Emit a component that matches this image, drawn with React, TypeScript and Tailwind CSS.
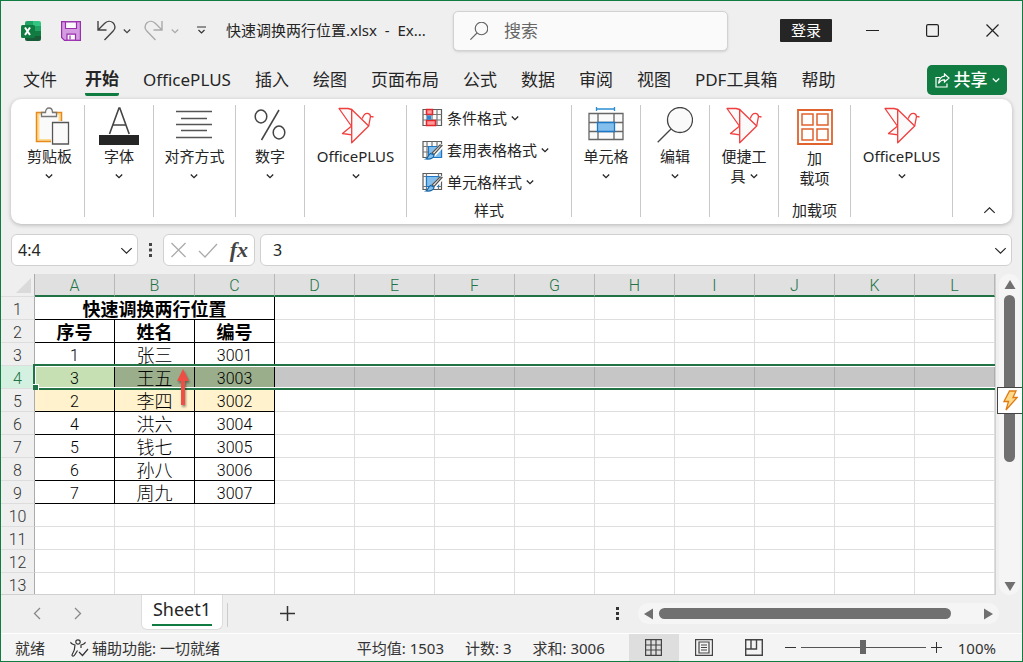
import type { ReactNode } from 'react';

const uiFont = 'font-["Noto_Sans","Noto_Sans_CJK_SC",sans-serif]';
const cellFont = 'font-["Roboto","Noto_Sans_CJK_SC",sans-serif]';

const tabs = ['文件', '开始', 'OfficePLUS', '插入', '绘图', '页面布局', '公式', '数据', '审阅', '视图', 'PDF工具箱', '帮助'];
const columns = ['A', 'B', 'C', 'D', 'E', 'F', 'G', 'H', 'I', 'J', 'K', 'L'];
const rowCount = 13;

const records: Record<number, string[]> = {
  2: ['序号', '姓名', '编号'],
  3: ['1', '张三', '3001'],
  4: ['3', '王五', '3003'],
  5: ['2', '李四', '3002'],
  6: ['4', '洪六', '3004'],
  7: ['5', '钱七', '3005'],
  8: ['6', '孙八', '3006'],
  9: ['7', '周九', '3007'],
};

function Chevron({ className = '', size = 8, up = false }: { className?: string; size?: number; up?: boolean }) {
  return (
    <svg width={size} height={size} viewBox="0 0 8 8" fill="none" stroke="currentColor" className={`shrink-0 ${className}`}
      strokeWidth={size > 8 ? 0.7 : 1.3}>
      <path d={up ? 'M0.8 5.5 4 2.3 7.2 5.5' : 'M0.8 2.5 4 5.7 7.2 2.5'} />
    </svg>
  );
}

function ExcelLogo() {
  return (
    <svg width="20" height="20" viewBox="0 0 20 20">
      <path d="M6 0h7v5H4V2a2 2 0 0 1 2-2Z" fill="#21a366" />
      <path d="M12 0h6a2 2 0 0 1 2 2v3h-8Z" fill="#33c481" />
      <path d="M4 5h8v5H4Z" fill="#107c41" />
      <path d="M12 5h8v5h-8Z" fill="#21a366" />
      <path d="M4 10h8v5H4Z" fill="#185c37" />
      <path d="M12 10h8v5h-8Z" fill="#107c41" />
      <path d="M4 15h16v3a2 2 0 0 1-2 2H6a2 2 0 0 1-2-2Z" fill="#185c37" />
      <rect y="4" width="14" height="13" rx="1.5" fill="#107c41" />
      <path d="m4 6.500 5 7.500M9 6.500 4 14" stroke="#fff" strokeWidth="2" />
    </svg>
  );
}

function SaveIcon() {
  return (
    <svg width="20" height="20" viewBox="0 0 20 20" stroke="#9a2fae" strokeWidth="1.2">
      <path d="M.6.6h18.800v18.800H3.500L.6 16.500Z" fill="#d59be0" />
      <path d="M4.500.8h11v6.700h-11Z" fill="#fafafa" />
      <path d="M6 19.200v-6h8.500v6Z" fill="#fafafa" />
      <path d="M9 14.500v4" fill="none" />
    </svg>
  );
}

function UndoIcon({ flip = false }: { flip?: boolean }) {
  return (
    <svg width="20" height="21" viewBox="0 0 20 21" fill="none" stroke="currentColor" strokeWidth="1.4"
      className={flip ? '-scale-x-100' : ''}>
      <path d="M1 1v9h8.500M1.500 9.500 7.500 3.500C10 1 13.500.6 16 2.800c2.600 2.300 2.600 5.900.2 8.200L7.500 20" />
    </svg>
  );
}

function SearchIcon({ size }: { size: number }) {
  return (
    <svg width={size} height={size} viewBox="0 0 36 36" fill="none" stroke="currentColor" strokeWidth={size > 20 ? 1.3 : 2.4}>
      <circle cx="23" cy="13" r="12.500" fill="#fafafa" />
      <path d="M14 22 .7 35.300" />
    </svg>
  );
}

function PasteIcon() {
  return (
    <svg width="41" height="38" viewBox="-6 0 41 38">
      <path d="M1.500 5.500h25v29h-25Z" fill="#fbdc97" stroke="#e8871a" strokeWidth="1.500" />
      <path d="M4.500 8h19v24h-19Z" fill="#fafafa" />
      <path d="M6.500 9.500v-4h4C10.500 2.500 12 1 14 1s3.500 1.500 3.500 4.500h4v4Z" fill="#fafafa" stroke="#777" strokeWidth="1.300" />
      <path d="M16 14h19v24H16Z" fill="#fff" />
      <path d="M17.500 15.500h16v21.500h-16Z" fill="#fafafa" stroke="#555" strokeWidth="1.300" />
    </svg>
  );
}

function FontIcon() {
  return (
    <svg width="40" height="38" viewBox="0 0 40 38">
      <path d="M10.500 27 20 1h.8L30.200 27M13.800 18h13" fill="none" stroke="#444" strokeWidth="1.600" />
      <path d="M0 28h40v10H0Z" fill="#252525" />
    </svg>
  );
}

function AlignIcon() {
  return (
    <svg width="36" height="38" viewBox="0 0 36 38" stroke="#555" strokeWidth="1.300">
      <path d="M0 4.500h36M5 11.500h26M0 17.500h36M5 23.500h26M0 30.500h36" />
    </svg>
  );
}

function PercentIcon() {
  return (
    <svg width="32" height="38" viewBox="0 0 32 38" fill="none" stroke="#444" strokeWidth="1.500">
      <ellipse cx="7" cy="9.500" rx="5.800" ry="6.500" />
      <ellipse cx="25" cy="25.500" rx="5.800" ry="6.500" />
      <path d="M25 3 7.500 33" />
    </svg>
  );
}

function BirdIcon() {
  return (
    <svg width="36" height="38" viewBox="0 0 36 38" fill="#fafafa" stroke="#f03e3e" strokeWidth="1.300" strokeLinejoin="round">
      <path d="M1 1.500h9l3.700 1V19.500Z" />
      <path d="m13 19.500-8.500 7 9.200 1.300" />
      <path d="M24.300 11.500c1-3.500 3-5.300 5.200-5.200 1.800.1 2.700 1.200 3 3L35.500 10M32.500 9.300 30.700 19" fill="none" />
      <path d="M13.700 2.500 30.700 19 13.700 35.800Z" />
    </svg>
  );
}

function CellsIcon() {
  return (
    <svg width="36" height="36" viewBox="0 0 36 36" fill="none" stroke="#666" strokeWidth="1.300">
      <path d="M1 6.500h34v26H1Z" fill="#fafafa" />
      <path d="M1 15.500h34M1 24.500h34M10 6.500v26M26 6.500v26" />
      <path d="M9.500 15.500h17v9h-17Z" fill="#83beec" stroke="#1e77c5" />
      <path d="M8.500 2h18M8.500 0v4M26.500 0v4" stroke="#2a8dd4" />
    </svg>
  );
}

function AddinIcon() {
  return (
    <svg width="36" height="38" viewBox="0 0 36 38" fill="none" stroke="#e0622d">
      <path d="M1 3h34v34H1Z" strokeWidth="1.800" />
      <path d="M5 7h11v11H5ZM20 7h11v11H20ZM5 22h11v11H5ZM20 22h11v11H20Z" strokeWidth="1.500" />
    </svg>
  );
}

function StyleIcon({ kind }: { kind: 'condition' | 'table' | 'cell' }) {
  return (
    <svg width="21" height="20" viewBox="0 0 21 20" fill="none" strokeWidth="1.200">
      <path d="M1 1.500h18.500v16H1Z" fill="#fafafa" stroke="#5c5c5c" />
      {kind !== 'cell' && <path d="M1 6.500h18.500M1 12h18.500M5 1.500v16M10 1.500v16M15 1.500v16" stroke="#777" />}
      {kind === 'condition' && (
        <>
          <path d="M4.500 1.500h6v5h-6ZM4.500 12.500h9v5h-9Z" fill="#ff9b9b" stroke="#e3262b" strokeWidth="1.500" />
          <path d="M5 7.300h4v4.500H5Z" fill="#2b88d8" />
        </>
      )}
      {kind === 'table' && <path d="M6.500 6.500h13v11h-13Z" fill="#83beec" stroke="#1e77c5" />}
      {kind === 'cell' && (
        <>
          <path d="M4.500 1.500v16M16.500 1.500v16M1 4.500h18.500M1 14.500h18.500" stroke="#777" />
          <path d="M4.500 4.500h12v10h-12Z" fill="#83beec" stroke="#1e77c5" />
        </>
      )}
      {kind !== 'condition' && (
        <>
          <path d="M20.500 5 11 15" stroke="#fff" strokeWidth="5" />
          <path d="m20 5.500-8 9-2-1.500 8-8Z" fill="#fafafa" stroke="#555" />
          <path d="M12 15c0 3-3 4.500-8 4 2-1 2-4 4.500-5.500Z" fill="#83beec" stroke="#1565a8" />
        </>
      )}
    </svg>
  );
}

function RibbonGroup({ width, title, children }: { width: string; title?: string; children: ReactNode }) {
  return (
    <div className={`${width} flex shrink-0 flex-col items-center justify-between border-r border-[#c8c8c8]`}>
      {children}
      {title && <span className="mb-px text-[15px] leading-3">{title}</span>}
    </div>
  );
}

function BigButton({ icon, label }: { icon: ReactNode; label: string }) {
  return (
    <button className="flex flex-col items-center">
      <span className="flex h-[41px] items-start justify-center pt-0.5">{icon}</span>
      <span className="text-[15px] leading-5 whitespace-nowrap">{label}</span>
      <Chevron className="mt-1.5" />
    </button>
  );
}

function StyleButton({ kind, label }: { kind: 'condition' | 'table' | 'cell'; label: string }) {
  return (
    <button className="flex h-[26px] items-center text-[15px]">
      <StyleIcon kind={kind} />
      <span className="mr-1 ml-1">{label}</span>
      <Chevron />
    </button>
  );
}

function TitleBar() {
  return (
    <header className="flex h-[59px] shrink-0 items-center pl-5">
      <ExcelLogo />
      <button aria-label="保存" className="ml-5"><SaveIcon /></button>
      <button aria-label="撤消" className="ml-4 flex items-center gap-1.5 text-[#444]"><UndoIcon /><Chevron /></button>
      <button aria-label="恢复" className="ml-3 flex items-center gap-2 text-[#aaa]"><UndoIcon flip /><Chevron /></button>
      <button aria-label="自定义快速访问工具栏" className="ml-[18px]">
        <svg width="9" height="9" viewBox="0 0 9 9" fill="none" stroke="#333" strokeWidth="1.200"><path d="M0 1h9M1.500 4l3 3 3-3" /></svg>
      </button>
      <span className="ml-5 w-[202px] text-[15px] whitespace-pre">快速调换两行位置.xlsx  -  Ex...</span>
      <label className="ml-[25px] flex h-10 w-[275px] items-center rounded-[5px] border border-[#d2d2d2] bg-[#fafafa] pl-4 text-[#666] shadow-sm">
        <SearchIcon size={18} />
        <input aria-label="搜索" placeholder="搜索" className="ml-4 w-0 flex-1 text-[17px] outline-none placeholder:text-[#666]" />
      </label>
      <div className="ml-auto flex items-center">
        <button className="h-[23px] w-[52px] rounded-[1px] bg-[#252525] text-[15px] leading-[23px] text-white">登录</button>
        <button aria-label="最小化" className="ml-[34px]">
          <svg width="13" height="13" viewBox="0 0 13 13" stroke="#222"><path d="M0 6.500h13" /></svg>
        </button>
        <button aria-label="最大化" className="ml-[47px]">
          <svg width="13" height="13" viewBox="0 0 13 13" fill="none" stroke="#222" strokeWidth="1.200"><rect x=".6" y=".6" width="11.800" height="11.800" rx="1.500" /></svg>
        </button>
        <button aria-label="关闭" className="mr-[23px] ml-[47px]">
          <svg width="13" height="13" viewBox="0 0 13 13" stroke="#222" strokeWidth="1.200"><path d="m.5.5 12 12M12.500.5l-12 12" /></svg>
        </button>
      </div>
    </header>
  );
}

function RibbonTabs() {
  return (
    <nav className="flex h-[39px] shrink-0 items-start pt-px pr-[15px] pl-[22px]">
      <div className="flex gap-6">
        {tabs.map(tab => (
          <button
            key={tab}
            className={`h-[35px] text-[17px] whitespace-nowrap ${tab === '开始' ? 'ml-1 rounded-b-[2px] border-b-[3px] border-[#107c41] pt-[3px] font-bold' : 'pt-0.5'}`}
          >
            {tab}
          </button>
        ))}
      </div>
      <button className="mt-1 ml-auto flex h-[30px] w-20 items-center justify-center gap-1 rounded-[5px] bg-[#107c41] text-[17px] font-medium text-white">
        <svg width="15" height="15" viewBox="0 0 15 15" fill="none" stroke="currentColor" strokeWidth="1.200">
          <path d="M5 4.500H1v9.500h11v-3.500M9.500 1l4.500 4-4.500 4V6.800C6.500 6.600 5 8 3.500 10.500 4 6 6 3.500 9.500 3.200Z" />
        </svg>
        共享
        <Chevron />
      </button>
    </nav>
  );
}

function Ribbon() {
  return (
    <section className="mx-[10px] flex h-[125px] shrink-0 rounded-[10px] bg-white pt-[6px] pb-[7px] shadow-[0_1px_4px_rgba(0,0,0,0.25)]">
      <RibbonGroup width="w-[74px] pl-1"><BigButton icon={<PasteIcon />} label="剪贴板" /></RibbonGroup>
      <RibbonGroup width="w-[69px]"><BigButton icon={<FontIcon />} label="字体" /></RibbonGroup>
      <RibbonGroup width="w-[82px]"><BigButton icon={<AlignIcon />} label="对齐方式" /></RibbonGroup>
      <RibbonGroup width="w-[69px]"><BigButton icon={<PercentIcon />} label="数字" /></RibbonGroup>
      <RibbonGroup width="w-[102px]"><BigButton icon={<BirdIcon />} label="OfficePLUS" /></RibbonGroup>
      <RibbonGroup width="w-[165px]" title="样式">
        <div className="flex w-full flex-col gap-[6px] pl-[15px]">
          <StyleButton kind="condition" label="条件格式" />
          <StyleButton kind="table" label="套用表格格式" />
          <StyleButton kind="cell" label="单元格样式" />
        </div>
      </RibbonGroup>
      <RibbonGroup width="w-[69px]"><BigButton icon={<CellsIcon />} label="单元格" /></RibbonGroup>
      <RibbonGroup width="w-[69px]"><BigButton icon={<span className="text-[#444]"><SearchIcon size={36} /></span>} label="编辑" /></RibbonGroup>
      <RibbonGroup width="w-[69px]">
        <button className="flex flex-col items-center text-[15px] leading-5">
          <span className="h-[41px] pt-0.5"><BirdIcon /></span>
          <span>便捷工</span>
          <span className="flex items-center gap-1">具 <Chevron /></span>
        </button>
      </RibbonGroup>
      <RibbonGroup width="w-[72px]" title="加载项">
        <button className="flex flex-col items-center text-[15px] leading-5">
          <span className="h-[43px] pt-0.5"><AddinIcon /></span>
          <span>加</span>
          <span>载项</span>
        </button>
      </RibbonGroup>
      <RibbonGroup width="w-[102px]"><BigButton icon={<BirdIcon />} label="OfficePLUS" /></RibbonGroup>
      <button aria-label="折叠功能区" className="mr-4 ml-auto self-end"><Chevron size={13} up /></button>
    </section>
  );
}

function FormulaBar() {
  return (
    <section className="mx-[10px] mt-[10px] mb-2 flex h-8 shrink-0 items-center">
      <div className="flex h-full w-[127px] items-center rounded-md border border-[#d0d0d0] bg-white pr-1 pl-1.5">
        <input aria-label="名称框" defaultValue="4:4" className="w-0 flex-1 text-[16px] outline-none" />
        <button aria-label="展开名称框"><Chevron size={13} /></button>
      </div>
      <svg width="25" height="14" viewBox="0 0 25 14" fill="#444"><path d="M11 0h3v3h-3zM11 5.500h3v3h-3zM11 11h3v3h-3z" /></svg>
      <div className="mr-[5px] flex h-full w-[92px] items-center justify-between rounded-md border border-[#d0d0d0] bg-white px-[6px]">
        <button aria-label="取消">
          <svg width="17" height="16" viewBox="0 0 17 16" stroke="#aaa" strokeWidth="1.300"><path d="m1.500 1 14 14M15.500 1l-14 14" /></svg>
        </button>
        <button aria-label="输入">
          <svg width="20" height="15" viewBox="0 0 20 15" fill="none" stroke="#aaa" strokeWidth="1.300"><path d="m1 8 6 6L19 1" /></svg>
        </button>
        <button aria-label="插入函数" className="font-['Liberation_Serif',serif] text-[22px] leading-6 font-bold text-[#444] italic">fx</button>
      </div>
      <div className="flex h-full flex-1 items-center rounded-md border border-[#d0d0d0] bg-white pr-1 pl-3">
        <input aria-label="编辑栏" defaultValue="3" className="w-0 flex-1 text-[16px] outline-none" />
        <button aria-label="展开编辑栏"><Chevron size={13} /></button>
      </div>
    </section>
  );
}

function cellClass(row: number, col: number) {
  const inTable = row <= 9 && col < 3;
  if (row === 4) {
    if (col === 0) return 'border-black bg-[#c6e0b4]';
    if (col < 3) return 'border-black bg-[#9bae8c]';
    return 'border-[#adadad] bg-[#c6c6c6]';
  }
  if (row === 5 && col < 3) return 'border-black bg-[#fff2cc]';
  return inTable ? 'border-black' : 'border-[#dedede]';
}

function Sheet() {
  return (
    <div className="relative min-w-0 flex-1 overflow-hidden border-r border-b border-[#d0d0d0] bg-white">
      <table className={`${cellFont} w-full table-fixed border-separate border-spacing-0 text-center text-[16px] leading-[18px] font-light text-black`}>
        <colgroup>
          <col className="w-[34px]" />
          {columns.map(c => <col key={c} className="w-20" />)}
          <col />
        </colgroup>
        <thead>
          <tr className="h-[23px]">
            <th className="border-r border-b border-[#ababab] border-b-[#ddd] bg-[#efefef] p-0">
              <svg width="15" height="15" viewBox="0 0 15 15" fill="#dadada" className="mr-[3px] ml-auto"><path d="M15 0v15H0Z" /></svg>
            </th>
            {columns.map(c => (
              <th key={c} scope="col" className="border-r border-b-2 border-r-[#b8b8b8] border-b-[#217346] bg-[#e0e0e0] p-0 pt-[3px] font-light text-[#217346]">{c}</th>
            ))}
            <th className="border-b-2 border-[#217346] bg-[#e0e0e0] p-0" />
          </tr>
        </thead>
        <tbody>
          {Array.from({ length: rowCount }, (_, i) => i + 1).map(row => (
            <tr key={row} className="h-[23px]">
              <th scope="row" className={`border-r border-b border-r-[#ababab] border-b-[#ddd] p-0 pt-1 font-light ${row === 4 ? 'bg-[#d3f0e0] text-[#217346]' : 'bg-[#efefef] text-[#333]'}`}>{row}</th>
              {row === 1 && <td colSpan={3} className="border-r border-b border-black p-0 pt-1 text-[18px] font-bold">快速调换两行位置</td>}
              {columns.map((c, col) => {
                if (row === 1 && col < 3) return null;
                const text = records[row]?.[col] ?? '';
                const size = row === 2 ? 'text-[18px] font-bold' : col === 1 ? 'text-[18px]' : '';
                return <td key={c} className={`border-r border-b p-0 pt-1 ${size} ${cellClass(row, col)}`}>{text}</td>;
              })}
              <td className={`border-b p-0 ${cellClass(row, 12)}`} />
            </tr>
          ))}
        </tbody>
      </table>
      {/* selected row outline and fill handle */}
      <div className="pointer-events-none absolute top-[90px] right-0 left-[32px] h-[26px] border-y-2 border-l-2 border-[#217346]">
        <div className="h-full border-y border-l border-white" />
        <div className="absolute -bottom-0.5 -left-0.5 size-[6px] border-t border-r border-white bg-[#217346]" />
      </div>
      <svg width="20" height="46" viewBox="0 0 20 46" className="absolute top-[92px] left-[172px] drop-shadow-[1px_2px_1px_rgba(0,0,0,0.4)]">
        <path d="m10 3 6 12h-4v24H8V15H4Z" fill="#ef4e45" />
      </svg>
    </div>
  );
}

function VerticalScroll() {
  return (
    <div className="relative w-[26px] shrink-0 pr-[2px] pl-[3px]">
      <div className="flex h-full flex-col items-center rounded-[10px] bg-[#f5f5f5] pt-[6px] pb-1">
        <svg width="12" height="9" viewBox="0 0 12 9" fill="#707070"><path d="M6 0 11.500 9H.5Z" /></svg>
        <div className="mt-[6px] h-[167px] w-[11px] rounded-full bg-[#707070]" />
        <svg width="12" height="9" viewBox="0 0 12 9" fill="#707070" className="mt-auto"><path d="M.5 0h11L6 9Z" /></svg>
      </div>
      <button aria-label="快速操作" className="absolute top-[113px] left-px flex h-[27px] w-[26px] items-center justify-center border border-[#444] bg-white">
        <svg width="15" height="21" viewBox="0 0 15 21" fill="#ffd98a" stroke="#e07b12" strokeWidth="1.300"><path d="M6.500 1H13L10 7.500h4.200L3 20l2.500-8.500H1Z" /></svg>
      </button>
    </div>
  );
}

function SheetTabs() {
  return (
    <div className="flex h-[39px] shrink-0 items-start border-b border-white">
      <div className="flex h-9 w-[140px] items-center gap-[33px] pl-8 text-[#888]">
        <button aria-label="上一张"><svg width="8" height="13" viewBox="0 0 8 13" fill="none" stroke="currentColor" strokeWidth="1.300"><path d="M7 1 1.500 6.500 7 12" /></svg></button>
        <button aria-label="下一张"><svg width="8" height="13" viewBox="0 0 8 13" fill="none" stroke="currentColor" strokeWidth="1.300"><path d="m1 1 5.500 5.500L1 12" /></svg></button>
      </div>
      <button className="h-[35px] w-[82px] rounded-b-md border border-t-0 border-[#ddd] bg-white px-[10px] pb-[3px] text-[18px] leading-[29px]">
        <span className="block h-[31px] border-b-2 border-[#107c41]">Sheet1</span>
      </button>
      <span className="mt-2 ml-1 h-6 w-px bg-[#ccc]" />
      <button aria-label="新工作表" className="mt-[11px] ml-[52px]">
        <svg width="15" height="15" viewBox="0 0 15 15" stroke="#333" strokeWidth="1.500"><path d="M0 7.500h15M7.500 0v15" /></svg>
      </button>
      <div className="mt-2 mr-[23px] ml-auto flex items-center">
        <svg width="3" height="13" viewBox="0 0 3 13" fill="#333" className="mr-[19px]"><path d="M0 0h3v3H0zM0 5h3v3H0zM0 10h3v3H0z" /></svg>
        <div className="flex h-[21px] w-[361px] items-center rounded-full bg-[#f5f5f5] px-[6px]">
          <svg width="9" height="12" viewBox="0 0 9 12" fill="#707070"><path d="M9 .5v11L0 6Z" /></svg>
          <div className="ml-[6px] h-[11px] w-[292px] rounded-full bg-[#707070]" />
          <svg width="9" height="12" viewBox="0 0 9 12" fill="#707070" className="ml-auto"><path d="M0 .5v11L9 6Z" /></svg>
        </div>
      </div>
    </div>
  );
}

function StatusBar() {
  return (
    <footer className="flex h-[27px] shrink-0 items-center bg-[#f4f4f4] pl-[14px] text-[15px] leading-6 whitespace-nowrap text-[#333]">
      <span>就绪</span>
      <button className="ml-[25px] flex items-center gap-[3px]">
        <svg width="19" height="18" viewBox="0 0 19 18" fill="none" stroke="#333" strokeWidth="1.200">
          <circle cx="8" cy="3" r="2.200" />
          <path d="M1 3c-.5 1 .5 2 4 3 0 5-1 7-3 10 0 1.500 2 1.500 3-.5l2.500-4M15 3c.5 1-.5 2-4 3v3M9 13l3.500 3.500L18 10" />
        </svg>
        辅助功能: 一切就绪
      </button>
      <div className="ml-auto flex gap-[21px]">
        <span>平均值: 1503</span>
        <span>计数: 3</span>
        <span>求和: 3006</span>
      </div>
      <div className="ml-6 flex h-full items-center">
        <button aria-label="普通" className="flex h-full w-[50px] items-center justify-center bg-[#dedede]">
          <svg width="17" height="17" viewBox="0 0 17 17" fill="none" stroke="#444" strokeWidth="1.200"><path d="M.6.6h15.800v15.800H.6ZM.6 6h15.800M.6 11h15.800M6 .6v15.800M11 .6v15.800" /></svg>
        </button>
        <button aria-label="页面布局视图" className="flex w-[50px] justify-center">
          <svg width="18" height="17" viewBox="0 0 18 17" fill="none" stroke="#444" strokeWidth="1.200"><path d="M.6.6h16.800v15.800H.6ZM4 3h10v11H4ZM6 6h6M6 8.500h6M6 11h6" /></svg>
        </button>
        <button aria-label="分页预览" className="flex w-[50px] justify-center">
          <svg width="18" height="17" viewBox="0 0 18 17" fill="none" stroke="#444" strokeWidth="1.400"><path d="M.7.7h16.600v15.600H.7ZM.7 10h10.800V.7M6 .7V10" /></svg>
        </button>
      </div>
      <button aria-label="缩小" className="ml-[6px]"><svg width="11" height="11" viewBox="0 0 11 11" stroke="#333"><path d="M0 5.500h11" /></svg></button>
      <input
        type="range"
        aria-label="缩放"
        defaultValue={50}
        className="mx-[5px] h-[14px] w-[125px] appearance-none bg-transparent [&::-webkit-slider-runnable-track]:h-px [&::-webkit-slider-runnable-track]:bg-[#555] [&::-webkit-slider-thumb]:-mt-[7px] [&::-webkit-slider-thumb]:h-[14px] [&::-webkit-slider-thumb]:w-[6px] [&::-webkit-slider-thumb]:appearance-none [&::-webkit-slider-thumb]:bg-[#666]"
      />
      <button aria-label="放大"><svg width="11" height="11" viewBox="0 0 11 11" stroke="#333"><path d="M0 5.500h11M5.500 0v11" /></svg></button>
      <button className="mr-[26px] ml-4">100%</button>
    </footer>
  );
}

export default function App() {
  return (
    <div className={`${uiFont} flex h-screen w-full flex-col overflow-hidden border border-[#107c41] bg-[#efefef] text-[#252525]`}>
      <TitleBar />
      <RibbonTabs />
      <Ribbon />
      <FormulaBar />
      <main className="flex min-h-0 flex-1">
        <Sheet />
        <VerticalScroll />
      </main>
      <SheetTabs />
      <StatusBar />
    </div>
  );
}
